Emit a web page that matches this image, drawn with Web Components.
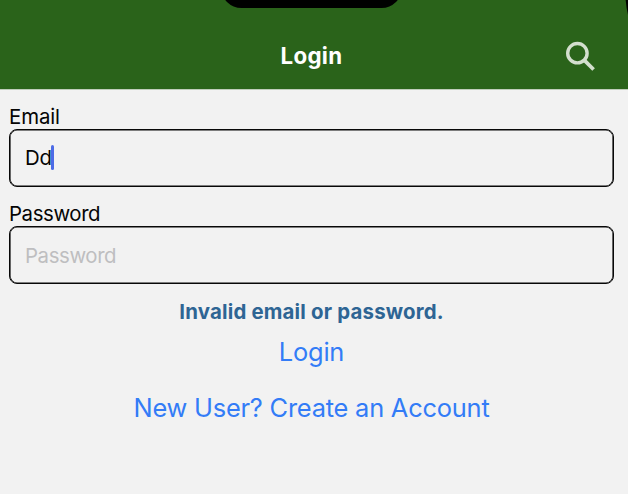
<!DOCTYPE html>
<html lang="en">
<head>
<meta charset="utf-8">
<title>Login</title>
<style>
html, body { margin: 0; height: 100%; overflow: hidden; background: #f2f2f2; }
body { font-family: Inter, "Liberation Sans", sans-serif; }
</style>
</head>
<body>
<login-screen></login-screen>
<script>
const define = (name, html) => customElements.define(name, class extends HTMLElement {
  constructor() {
    super();
    const t = document.createElement('template');
    t.innerHTML = html;
    this.attachShadow({ mode: 'open' }).append(t.content.cloneNode(true));
  }
});

define('search-icon', `
<style>:host { display: block; width: 32px; height: 32px; } svg { display: block; }</style>
<svg width="32" height="32" viewBox="0 0 32 32" fill="none" stroke="#d3dfce">
  <circle cx="13.4" cy="13.2" r="9.7" stroke-width="3.4"/>
  <path d="M20.2 20.1 L29.6 29.5" stroke-width="3.7"/>
</svg>`);

define('app-header', `
<style>
:host { display: grid; grid-template-columns: 1fr auto 1fr; align-items: center; box-sizing: border-box;
  height: 90px; padding-top: 23px; background: #2a631a; position: relative; overflow: hidden; border-bottom: 1px solid #c0cdbb; }
.title { grid-column: 2; font-weight: 700; font-size: 22.3px; line-height: 28px; color: #fff; letter-spacing: .3px; margin-right: 5px; }
.end { justify-self: end; margin-right: 32px; }
.notch { position: absolute; top: -33px; left: 221px; width: 181px; height: 41px; border-radius: 20.5px; background: #000; }
.corner { position: absolute; top: 0; right: 0; display: block; }
</style>
<div class="notch"></div>
<svg class="corner" width="3" height="16" viewBox="0 0 3 16"><path d="M.6 0 Q1.4 8 3 15 V0Z" fill="#000"/></svg>
<div class="title"><slot></slot></div>
<div class="end"><slot name="end"></slot></div>`);

define('text-field', `
<style>
:host { display: block; font-size: 20.4px; line-height: 25px; color: #050505; letter-spacing: -.1px; }
:host([placeholder]) { letter-spacing: -.4px; }
.box { display: flex; align-items: center; box-sizing: border-box; height: 58px; padding: 0 15px 1px;
  border: 1px solid #080808; border-radius: 8px; box-shadow: inset 0 0 0 .6px #080808; }
:host([placeholder]) .box { padding-bottom: 0; }
:host([placeholder]) .value { color: #bebec0; padding-top: 1px; }
</style>
<div class="label"><slot name="label"></slot></div>
<div class="box"><span class="value"><slot></slot></span><slot name="caret"></slot></div>`);

define('text-caret', `
<style>:host { display: block; width: 3px; height: 25px; border-radius: 1.5px; background: #4d6be6; margin-left: -1px; }</style>`);

define('error-message', `
<style>:host { display: block; text-align: center; font-weight: 700; font-size: 20.4px; line-height: 26px; color: #2e6594; letter-spacing: .19px; }</style>
<slot></slot>`);

define('link-button', `
<style>:host { display: block; text-align: center; font-size: 25.4px; line-height: 32px; color: #337cf7; letter-spacing: -.21px; }</style>
<slot></slot>`);

define('login-screen', `
<style>
:host { display: block; }
main { display: flex; flex-direction: column; padding: 14px 14px 0 9px; }
text-field + text-field { margin-top: 14px; }
error-message { margin-top: 15px; }
.submit { margin-top: 11px; }
.create { margin-top: 24px; }
</style>
<app-header>Login<search-icon slot="end"></search-icon></app-header>
<main>
  <text-field><span slot="label">Email</span>Dd<text-caret slot="caret"></text-caret></text-field>
  <text-field placeholder><span slot="label">Password</span>Password</text-field>
  <error-message>Invalid email or password.</error-message>
  <link-button class="submit">Login</link-button>
  <link-button class="create">New User? Create an Account</link-button>
</main>`);
</script>
</body>
</html>
